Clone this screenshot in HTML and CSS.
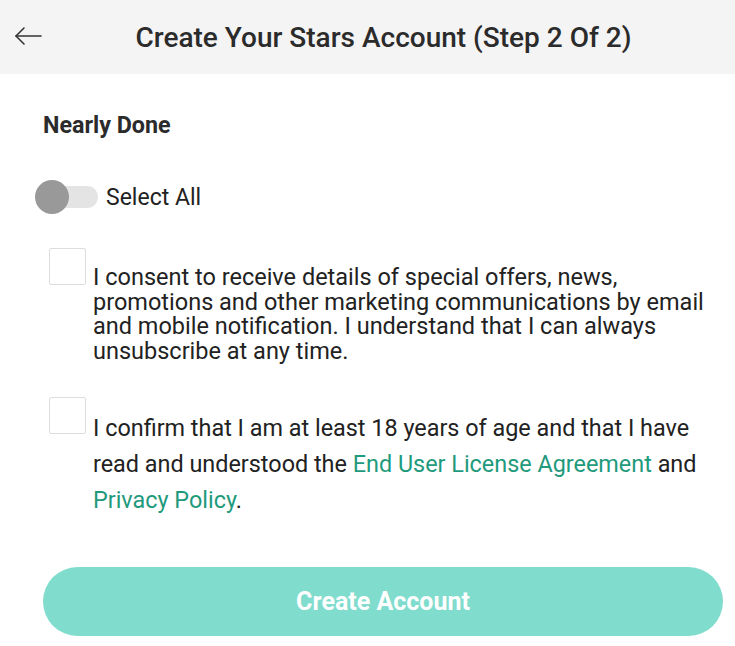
FILE: index.html
```html
<!DOCTYPE html>
<html lang="en">
<head>
    <meta charset="UTF-8">
    <meta name="viewport" content="width=device-width, initial-scale=1.0">
    <title>Create Your Stars Account</title>
    <link rel="stylesheet" href="styles.css">
</head>
<body>
    <header class="topbar">
        <button class="back-btn" aria-label="Back">
            <svg width="28" height="20" viewBox="0 0 28 20" fill="none" stroke="#333" stroke-width="1.6" stroke-linecap="round" stroke-linejoin="round">
                <path d="M27 10H2"/>
                <path d="M10 2L2 10l8 8"/>
            </svg>
        </button>
        <h1 class="title">Create Your Stars Account (Step 2 Of 2)</h1>
    </header>

    <main class="content">
        <h2 class="subtitle">Nearly Done</h2>

        <label class="toggle-row">
            <span class="toggle">
                <span class="toggle-track"></span>
                <span class="toggle-knob"></span>
            </span>
            <span class="toggle-label">Select All</span>
        </label>

        <div class="check-row">
            <span class="checkbox"></span>
            <p class="check-text consent">I consent to receive details of special offers, news, promotions and other marketing communications by email and mobile notification. I understand that I can always unsubscribe at any time.</p>
        </div>

        <div class="check-row">
            <span class="checkbox"></span>
            <p class="check-text confirm">I confirm that I am at least 18 years of age and that I have read and understood the <a href="#">End User License Agreement</a> and <a href="#">Privacy Policy</a>.</p>
        </div>

        <button class="create-btn">Create Account</button>
    </main>
</body>
</html>
```

FILE: styles.css
```css
body {
    margin: 0;
    font-family: Roboto, "Liberation Sans", sans-serif;
    color: #222;
    background: #fff;
}

.topbar {
    height: 74px;
    padding-left: 32px;
    background: #f4f4f4;
    display: flex;
    align-items: center;
    position: relative;
}

.back-btn {
    position: absolute;
    left: 14px;
    top: 26px;
    padding: 0;
    border: none;
    background: none;
    cursor: pointer;
}

.title {
    flex: 1;
    margin: 0;
    text-align: center;
    font-size: 28px;
    font-weight: 500;
    color: #2b2b2b;
}

.content {
    padding: 0 13px 0 43px;
}

.subtitle {
    margin: 37px 0 0;
    font-size: 23.3px;
    font-weight: 700;
    color: #2b2b2b;
}

.toggle-row {
    display: flex;
    align-items: center;
    margin: 41px 0 0 -8px;
}

.toggle {
    position: relative;
    width: 64px;
    height: 34px;
}

.toggle-track {
    position: absolute;
    left: 5px;
    top: 6px;
    width: 58px;
    height: 22px;
    border-radius: 11px;
    background: #e4e4e4;
}

.toggle-knob {
    position: absolute;
    left: 0;
    top: 0;
    width: 34px;
    height: 34px;
    border-radius: 50%;
    background: #999;
}

.toggle-label {
    margin-left: 7px;
    font-size: 23px;
}

.check-row {
    display: flex;
    align-items: flex-start;
    margin-top: 34px;
    padding-left: 6px;
}

.checkbox {
    flex: none;
    width: 35px;
    height: 35px;
    border: 1px solid #ddd;
    border-radius: 2px;
}

.check-text {
    margin: 17px 0 0 7px;
}

.consent {
    font-size: 23.5px;
    line-height: 24.5px;
}

.confirm {
    font-size: 23.4px;
    line-height: 36px;
    margin-top: 13px;
}

.confirm a {
    color: #1f9a7c;
    text-decoration: none;
}

.create-btn {
    display: block;
    width: 680px;
    height: 69px;
    margin-top: 49px;
    border: none;
    border-radius: 35px;
    background: #80dccd;
    color: #fff;
    font-family: Roboto, sans-serif;
    font-size: 25px;
    font-weight: 700;
    cursor: pointer;
}
```
